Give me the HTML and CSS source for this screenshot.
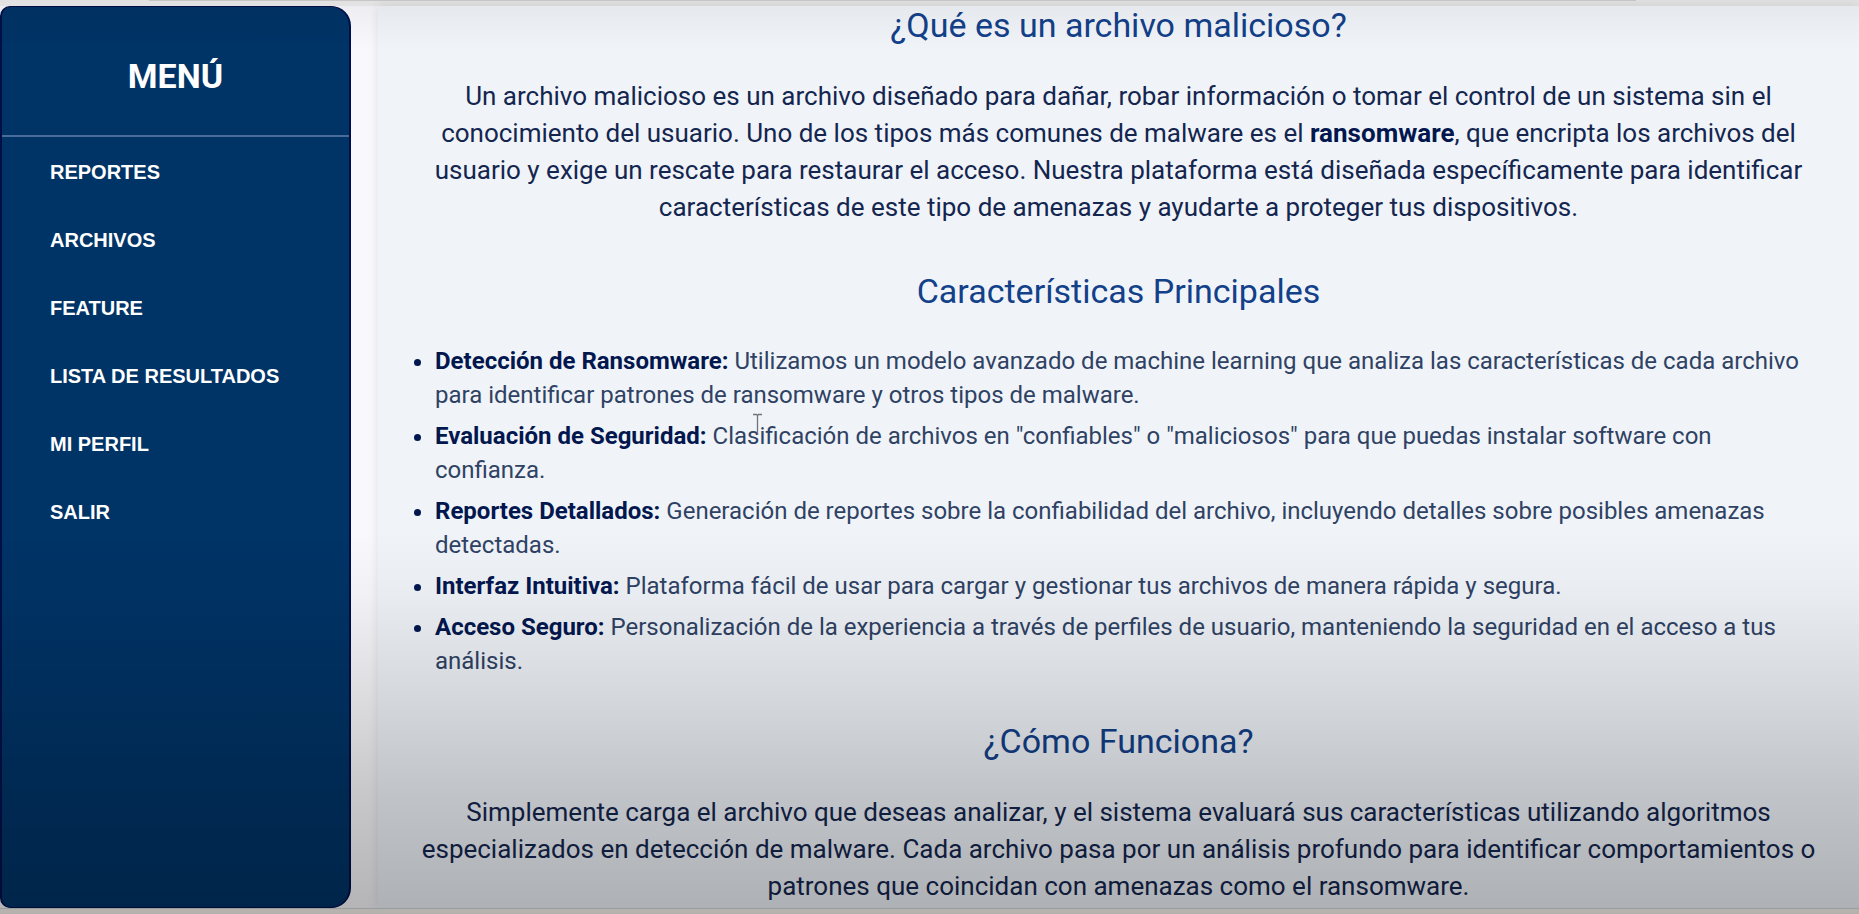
FILE: index.html
```html
<!DOCTYPE html>
<html lang="es">
<head>
<meta charset="utf-8">
<title>Detección de archivos maliciosos</title>
<link rel="stylesheet" href="styles.css">
</head>
<body class="page">
<div class="topbar"><div class="topbar-line"></div></div>
<div class="layout">
  <nav class="sidebar" aria-label="Menú">
    <h1 class="menu-title">MENÚ</h1>
    <ul class="menu">
      <li><a class="menu-link" href="#reportes">REPORTES</a></li>
      <li><a class="menu-link" href="#archivos">ARCHIVOS</a></li>
      <li><a class="menu-link" href="#feature">FEATURE</a></li>
      <li><a class="menu-link" href="#resultados">LISTA DE RESULTADOS</a></li>
      <li><a class="menu-link" href="#perfil">MI PERFIL</a></li>
      <li><a class="menu-link" href="#salir">SALIR</a></li>
    </ul>
  </nav>
  <main class="content">
    <section>
      <h2 class="title">¿Qué es un archivo malicioso?</h2>
      <p class="text">Un archivo malicioso es un archivo diseñado para dañar, robar información o tomar el control de un sistema sin el conocimiento del usuario. Uno de los tipos más comunes de malware es el <strong>ransomware</strong>, que encripta los archivos del usuario y exige un rescate para restaurar el acceso. Nuestra plataforma está diseñada específicamente para identificar características de este tipo de amenazas y ayudarte a proteger tus dispositivos.</p>
    </section>
    <section>
      <h2 class="title">Características Principales</h2>
      <ul class="features">
        <li><strong>Detección de Ransomware:</strong> Utilizamos un modelo avanzado de machine learning que analiza las características de cada archivo para identificar patrones de ransomware y otros tipos de malware.</li>
        <li><strong>Evaluación de Seguridad:</strong> Clasificación de archivos en "confiables" o "maliciosos" para que puedas instalar software con confianza.</li>
        <li><strong>Reportes Detallados:</strong> Generación de reportes sobre la confiabilidad del archivo, incluyendo detalles sobre posibles amenazas detectadas.</li>
        <li><strong>Interfaz Intuitiva:</strong> Plataforma fácil de usar para cargar y gestionar tus archivos de manera rápida y segura.</li>
        <li><strong>Acceso Seguro:</strong> Personalización de la experiencia a través de perfiles de usuario, manteniendo la seguridad en el acceso a tus análisis.</li>
      </ul>
    </section>
    <section>
      <h2 class="title">¿Cómo Funciona?</h2>
      <p class="text">Simplemente carga el archivo que deseas analizar, y el sistema evaluará sus características utilizando algoritmos especializados en detección de malware. Cada archivo pasa por un análisis profundo para identificar comportamientos o patrones que coincidan con amenazas como el ransomware.</p>
    </section>
  </main>
</div>
<div class="bottombar"></div>
<div class="shade"></div>
<svg class="cursor" viewBox="0 0 11 23" aria-hidden="true"><path d="M1 1.500H4.500L5.500 2.500L6.500 1.500H10M5.500 2.500V21.500" fill="none" stroke="#70747a" stroke-width="1.300"/></svg>
</body>
</html>
```
FILE: styles.css
```css
* { box-sizing: border-box; }

.page {
  position: relative;
  display: flex;
  flex-direction: column;
  height: 100vh;
  margin: 0;
  overflow: hidden;
  background: #f9f8fc;
  font-family: Roboto, sans-serif;
}

.topbar {
  flex: none;
  height: 6px;
  padding: 0 12% 0 8%;
  background: #eeedee;
}

.topbar-line {
  height: 1px;
  background: #d2d0d0;
}

.layout {
  display: flex;
  flex: 1;
  gap: 27px;
  min-height: 0;
}

.sidebar {
  flex: none;
  width: 351px;
  border: 2px solid #000f48;
  border-top-width: 1px;
  border-bottom-width: 1px;
  border-radius: 10px 20px 20px 10px;
  background: #003366;
  color: #fff;
}

.menu-title {
  margin: 0;
  padding: 48px 0 38px;
  border-bottom: 2px solid #4a6b98;
  font-size: 34px;
  line-height: 42px;
  text-align: center;
}

.menu {
  display: grid;
  gap: 20px;
  margin: 0;
  padding: 11px 48px;
  list-style: none;
}

.menu-link {
  display: block;
  color: #fff;
  font: bold 20px/48px "Liberation Sans", Arial, sans-serif;
  text-decoration: none;
}

.content {
  flex: 1;
  min-width: 0;
  padding: 0 34px;
  overflow: hidden;
  background: #f0f4f9;
  box-shadow: 0 0 10px rgba(0, 0, 0, 0.1);
  color: #14264f;
}

.title {
  margin: 0;
  color: #124089;
  font-size: 34px;
  font-weight: 400;
  line-height: 38px;
  text-align: center;
}

.text {
  margin: 34px 0 46px;
  font-size: 26px;
  line-height: 37px;
  text-align: center;
}

.text strong,
.features strong { color: #03174f; }

.features {
  display: grid;
  gap: 7px;
  margin: 34px 0 44px;
  padding-left: 23px;
  color: #2f4264;
  font-size: 24px;
  line-height: 34px;
}

.features li::marker { color: #03174f; }

.bottombar {
  flex: none;
  height: 6px;
  border-top: 1px solid #d2d8dd;
  background: #fbf6f0;
}

/* Darkening at the top and bottom edges, over the whole page */
.shade {
  position: absolute;
  inset: 0;
  background:
    linear-gradient(rgba(0, 0, 0, 0.05), transparent 50px),
    linear-gradient(transparent 58%, rgba(0, 0, 0, 0.03) 65%, rgba(0, 0, 0, 0.12) 77%, rgba(0, 0, 0, 0.20) 87%, rgba(0, 0, 0, 0.28));
  pointer-events: none;
}

.cursor {
  position: absolute;
  top: 413px;
  left: 752px;
  width: 11px;
  height: 23px;
}
```
